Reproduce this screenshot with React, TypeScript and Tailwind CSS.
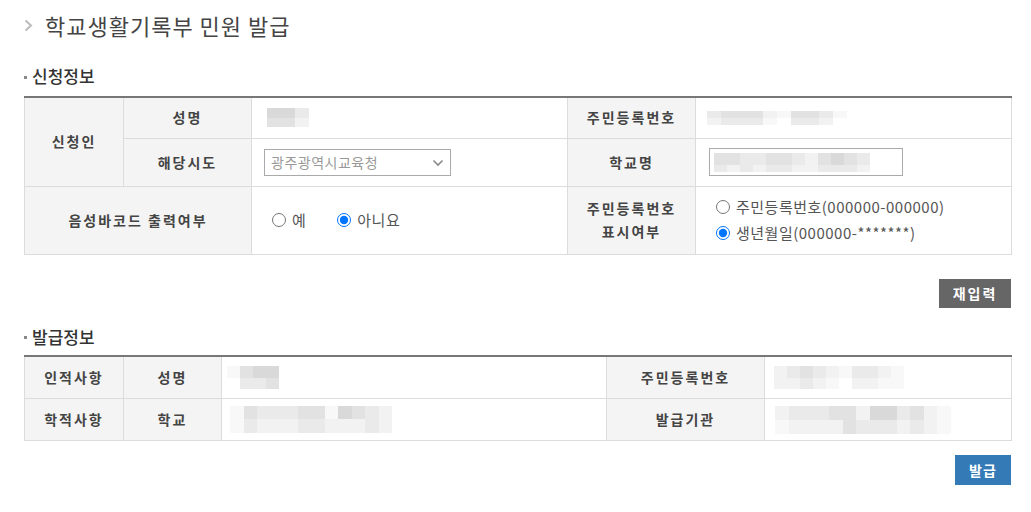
import React from 'react';

const font = { fontFamily: '"Noto Sans CJK KR", "Noto Sans", sans-serif' };

const shades = [
  'bg-[#d9d9d9]',
  'bg-[#e2e2e2]',
  'bg-[#eaeaea]',
  'bg-[#f2f2f2]',
  'bg-[#f8f8f8]',
  'bg-transparent',
];

// pixelated (blurred) personal data
const Pix: React.FC<{ rows: number[][]; cell?: string; heights: string[] }> = ({ rows, cell = 'w-[14px]', heights }) => (
  <div className="flex flex-col">
    {rows.map((r, i) => (
      <div key={i} className={`flex ${heights[i]}`}>
        {r.map((s, j) => (
          <div key={j} className={`${cell} h-full ${shades[s]}`} />
        ))}
      </div>
    ))}
  </div>
);

const th = 'bg-[#f4f4f4] border border-[#dcdcdc] text-center font-bold text-[14px] tracking-[2px] text-[#444] align-middle';
const td = 'bg-white border border-[#dcdcdc] align-middle';

const Radio: React.FC<{ checked?: boolean; label: string; name: string }> = ({ checked, label, name }) => (
  <label className="flex items-center gap-[6px] text-[15px] tracking-[0.5px] text-[#555]">
    <input type="radio" name={name} defaultChecked={checked} className="m-0 w-[14px] h-[14px]" />
    {label}
  </label>
);

const SectionTitle: React.FC<{ text: string }> = ({ text }) => (
  <div className="flex items-center h-[20px]">
    <span className="w-[3px] h-[3px] bg-[#888] mr-[5px] mt-[2px]" />
    <span className="text-[17px] font-medium text-[#333] leading-[20px]">{text}</span>
  </div>
);

export default function App() {
  return (
    <div className="w-[1031px] h-[512px] bg-white pl-6 pr-5 pt-[11px]" style={font}>
      {/* Title */}
      <div className="flex items-center h-[28px]">
        <svg width="9" height="13" viewBox="0 0 9 13" className="mr-[12px] mt-[1px]">
          <polyline points="1.5,1.5 7,6.5 1.5,11.5" fill="none" stroke="#bbb" strokeWidth="2" />
        </svg>
        <h1 className="text-[22px] leading-[28px] tracking-[1px] text-[#444] font-normal">학교생활기록부 민원 발급</h1>
      </div>

      <div className="mt-[27px]">
        <SectionTitle text="신청정보" />
      </div>

      <table className="mt-[10px] w-[987px] table-fixed border-collapse border-t-2 border-t-[#777]">
        <colgroup>
          <col className="w-[99px]" />
          <col className="w-[128px]" />
          <col className="w-[316px]" />
          <col className="w-[128px]" />
          <col className="w-[316px]" />
        </colgroup>
        <tbody>
          <tr className="h-[41px]">
            <th rowSpan={2} className={th}>신청인</th>
            <th className={th}>성명</th>
            <td className={`${td} pl-[15px]`}>
              <Pix rows={[[0, 0, 2], [1, 1, 3]]} heights={['h-[10px]', 'h-[9px]']} />
            </td>
            <th className={th}>주민등록번호</th>
            <td className={`${td} pl-[11px]`}>
              <Pix
                rows={[[2, 1, 1, 1, 3, 4, 1, 1, 2, 4], [3, 2, 2, 2, 4, 5, 2, 2, 3, 5]]}
                heights={['h-[7px]', 'h-[7px]']}
              />
            </td>
          </tr>
          <tr className="h-[48px]">
            <th className={th}>해당시도</th>
            <td className={`${td} pl-[12px]`}>
              <div className="relative w-[187px] h-[27px]">
                <select className="appearance-none w-full h-full border border-[#aaa] bg-white pl-[6px] text-[14px] tracking-[0.5px] text-[#999] outline-none">
                  <option>광주광역시교육청</option>
                </select>
                <svg width="12" height="8" viewBox="0 0 12 8" className="absolute right-[7px] top-[10px] pointer-events-none">
                  <polyline points="1.5,1.5 6,6 10.5,1.5" fill="none" stroke="#888" strokeWidth="1.6" />
                </svg>
              </div>
            </td>
            <th className={th}>학교명</th>
            <td className={`${td} pl-[13px]`}>
              <div className="w-[194px] h-[28px] border border-[#aaa] flex items-center pl-[4px]">
                <Pix
                  rows={[[1, 1, 2, 2, 1, 1, 2, 3, 1, 0, 1, 2], [2, 3, 2, 3, 2, 2, 3, 3, 2, 2, 2, 3]]}
                  cell="w-[13px]"
                  heights={['h-[12px]', 'h-[7px]']}
                />
              </div>
            </td>
          </tr>
          <tr className="h-[68px]">
            <th colSpan={2} className={th}>음성바코드 출력여부</th>
            <td className={`${td} pl-[20px]`}>
              <div className="flex items-center gap-[31px]">
                <Radio name="barcode" label="예" />
                <Radio name="barcode" label="아니요" checked />
              </div>
            </td>
            <th className={`${th} leading-[23px]`}>
              주민등록번호
              <br />
              표시여부
            </th>
            <td className={`${td} pl-[20px]`}>
              <div className="flex flex-col gap-[3px]">
                <Radio name="jumin" label="주민등록번호(000000-000000)" />
                <Radio name="jumin" label="생년월일(000000-*******)" checked />
              </div>
            </td>
          </tr>
        </tbody>
      </table>

      <div className="flex justify-end mt-[24px]">
        <button className="w-[72px] h-[29px] bg-[#666] text-white font-bold text-[14px] tracking-[2px]">재입력</button>
      </div>

      <div className="mt-[19px]">
        <SectionTitle text="발급정보" />
      </div>

      <table className="mt-[8px] w-[987px] table-fixed border-collapse border-t-2 border-t-[#777]">
        <colgroup>
          <col className="w-[99px]" />
          <col className="w-[98px]" />
          <col className="w-[385px]" />
          <col className="w-[158px]" />
          <col className="w-[247px]" />
        </colgroup>
        <tbody>
          <tr className="h-[43px]">
            <th className={th}>인적사항</th>
            <th className={th}>성명</th>
            <td className={`${td} pl-[5px]`}>
              <Pix rows={[[4, 1, 0, 0], [5, 2, 2, 1]]} cell="w-[13px]" heights={['h-[12px]', 'h-[11px]']} />
            </td>
            <th className={th}>주민등록번호</th>
            <td className={`${td} pl-[9px]`}>
              <Pix
                rows={[[3, 2, 1, 2, 3, 4, 2, 2, 3, 4], [3, 3, 2, 3, 4, 5, 3, 3, 4, 4]]}
                cell="w-[13px]"
                heights={['h-[12px]', 'h-[11px]']}
              />
            </td>
          </tr>
          <tr className="h-[42px]">
            <th className={th}>학적사항</th>
            <th className={th}>학교</th>
            <td className={`${td} pl-[8px]`}>
              <Pix
                rows={[[4, 1, 2, 2, 2, 1, 1, 4, 0, 1, 2, 3], [4, 2, 3, 3, 3, 2, 2, 3, 3, 3, 2, 3]]}
                cell="w-[13.5px]"
                heights={['h-[13px]', 'h-[14px]']}
              />
            </td>
            <th className={th}>발급기관</th>
            <td className={`${td} pl-[10px]`}>
              <Pix
                rows={[[3, 2, 2, 2, 1, 1, 3, 0, 0, 2, 1, 3, 4], [4, 3, 3, 3, 3, 1, 2, 2, 2, 3, 2, 3, 4]]}
                cell="w-[13.5px]"
                heights={['h-[14px]', 'h-[14px]']}
              />
            </td>
          </tr>
        </tbody>
      </table>

      <div className="flex justify-end mt-[14px]">
        <button className="w-[56px] h-[30px] bg-[#337ab7] text-white font-bold text-[14px] tracking-[1px]">발급</button>
      </div>
    </div>
  );
}
